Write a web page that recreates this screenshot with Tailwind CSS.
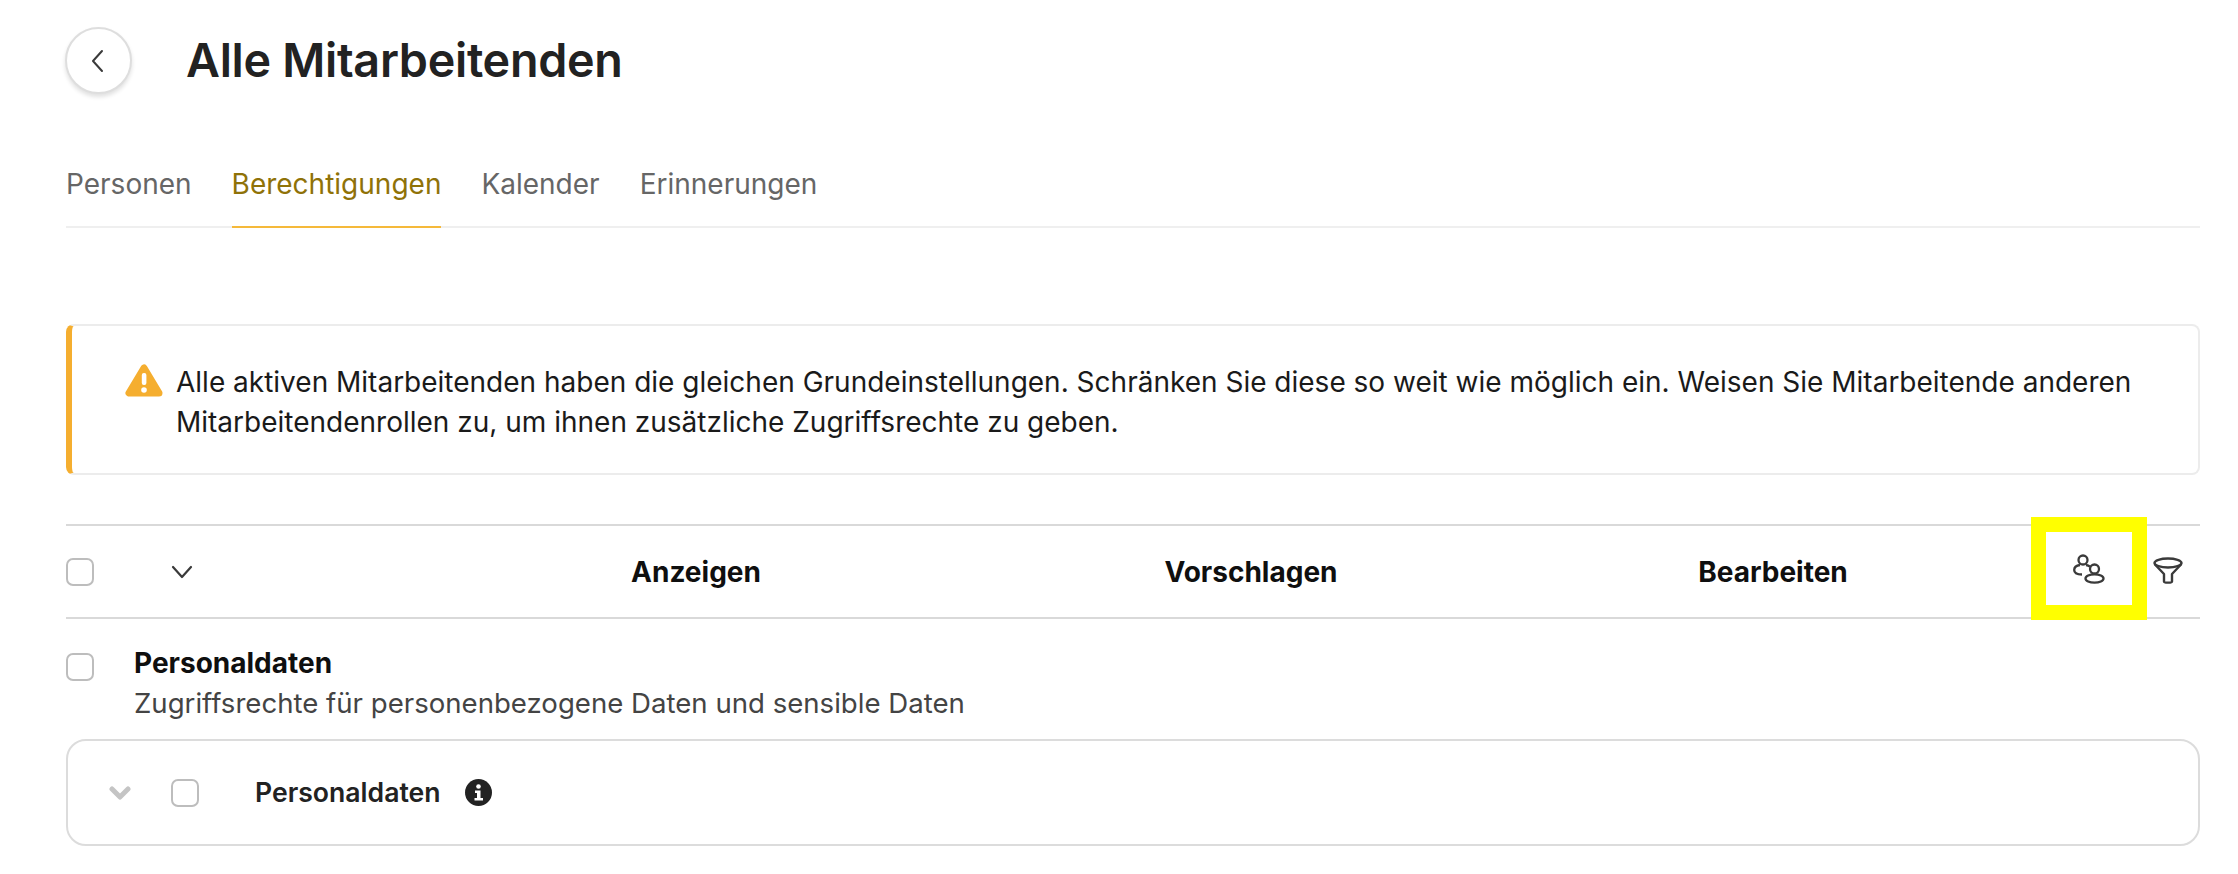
<!DOCTYPE html>
<html lang="de">
<head>
  <meta charset="UTF-8" />
  <title>Alle Mitarbeitenden</title>
  <script src="https://cdn.jsdelivr.net/npm/@tailwindcss/browser@4"></script>
</head>
<body class="bg-white font-['Inter',sans-serif] h-[874px] overflow-hidden">
  <main class="pl-[66px] pr-[38px]">

    <!-- Titel -->
    <div class="flex items-center gap-[54px] pt-[27px]">
      <button class="-ml-px w-[67px] h-[67px] rounded-full bg-white border-2 border-[#dedede] shadow-[0_3px_4px_rgba(0,0,0,0.12)] flex items-center justify-center">
        <svg class="-ml-[3px]" width="14" height="24" viewBox="0 0 14 24" fill="none" stroke="#3a3a3a" stroke-width="2" stroke-linecap="round" stroke-linejoin="round"><path d="M12 2 3 12l9 10"/></svg>
      </button>
      <h1 class="text-[46.7px] leading-[64px] -mt-[2px] font-semibold text-[#222222] tracking-[-0.3px]">Alle Mitarbeitenden</h1>
    </div>

    <!-- Tabs -->
    <nav class="flex gap-[40px] mt-[65px] h-[69px] border-b-2 border-[#efefef] text-[28px] leading-[50px] text-[#666666]">
      <a>Personen</a>
      <a class="h-[69px] text-[#8f7208] border-b-2 border-[#f5b93a]">Berechtigungen</a>
      <a>Kalender</a>
      <a>Erinnerungen</a>
    </nav>

    <!-- Hinweis -->
    <div class="mt-[96px] h-[151px] flex items-start gap-[13px] pl-[53px] pr-[50px] pt-[36px] rounded-[8px] border-2 border-[#ececec] border-l-[6px] border-l-[#f5ae2f] text-[28px] leading-[40px] text-[#1a1a1a]">
      <svg class="shrink-0 mt-[2px]" width="38" height="34" viewBox="0 0 38 34"><path d="M19 4 4 29h30z" fill="#f5ae2f" stroke="#f5ae2f" stroke-width="7" stroke-linejoin="round"/><rect x="16.8" y="9" width="4.6" height="12" rx="2" fill="#fff"/><circle cx="19" cy="26" r="2.8" fill="#fff"/></svg>
      <p>Alle aktiven Mitarbeitenden haben die gleichen Grundeinstellungen. Schränken Sie diese so weit wie möglich ein. Weisen Sie Mitarbeitende anderen Mitarbeitendenrollen zu, um ihnen zusätzliche Zugriffsrechte zu geben.</p>
    </div>

    <!-- Kopfzeile -->
    <div class="relative mt-[49px] h-[95px] flex items-center border-y-2 border-[#d9d9d9] text-[28px] font-bold text-[#0f0f0f]">
      <span class="w-[28px] h-[28px] rounded-[7px] border-2 border-[#bdbdbd]"></span>
      <svg class="ml-[77px]" width="22" height="14" viewBox="0 0 22 14" fill="none" stroke="#3a3a3a" stroke-width="2.2" stroke-linecap="round" stroke-linejoin="round"><path d="m2 2 9 10 9-10"/></svg>
      <span class="absolute left-[530px] w-[200px] text-center">Anzeigen</span>
      <span class="absolute left-[1085px] w-[200px] text-center">Vorschlagen</span>
      <span class="absolute left-[1607px] w-[200px] text-center">Bearbeiten</span>

      <!-- Markierung -->
      <div class="absolute left-[1965px] top-[-9px] w-[116px] h-[103px] border-[15px] border-[#ffff00] bg-white flex items-center justify-center">
        <svg width="32" height="30" viewBox="0 0 32 30" fill="none" stroke="#3a3a3a" stroke-width="2.3"><circle cx="10" cy="6" r="4.500"/><path d="M7 11C3.500 11.500 1.200 13.500 1.200 16c0 3 3 4.500 7.800 4.500"/><path d="M13 11c1.500.2 3 .8 4 1.700"/><circle cx="21.500" cy="15" r="4.500"/><ellipse cx="21.500" cy="24.500" rx="9" ry="4.200"/></svg>
      </div>
      <svg class="absolute left-[2087px] top-[31px]" width="30" height="27" viewBox="0 0 30 27" fill="none" stroke="#3a3a3a" stroke-width="2.4" stroke-linejoin="round"><ellipse cx="15" cy="6" rx="13.500" ry="4.500"/><path d="M2 7.500 11 17v7.500c0 1.500 8 1.500 8 0V17L28 7.500"/></svg>
    </div>

    <!-- Personaldaten -->
    <div class="flex mt-[32px]">
      <span class="mt-[2px] w-[28px] h-[28px] rounded-[7px] border-2 border-[#bdbdbd]"></span>
      <div class="ml-[40px]">
        <h2 class="text-[28px] leading-[40px] font-bold text-[#0f0f0f] -mt-[8px]">Personaldaten</h2>
        <p class="text-[27.6px] leading-[40px] text-[#444444]">Zugriffsrechte für personenbezogene Daten und sensible Daten</p>
      </div>
    </div>

    <div class="mt-[16px] h-[107px] flex items-center rounded-[20px] border-2 border-[#dcdcdc]">
      <svg class="ml-[41px]" width="22" height="14" viewBox="0 0 22 14" fill="none" stroke="#c4c4c4" stroke-width="5" stroke-linecap="round" stroke-linejoin="round"><path d="m3 3 8 8 8-8"/></svg>
      <span class="ml-[40px] w-[28px] h-[28px] rounded-[7px] border-2 border-[#bdbdbd]"></span>
      <span class="ml-[56px] text-[26.6px] font-semibold text-[#222222]">Personaldaten</span>
      <span class="ml-[24px] w-[27px] h-[27px] rounded-full bg-[#222222] flex items-center justify-center">
        <svg width="11" height="17" viewBox="0 0 11 17" fill="#fff"><circle cx="5.500" cy="2.500" r="2.300"/><path d="M2 6.500h5.500V14H10v2.500H1.500V14H4V9H2z"/></svg>
      </span>
    </div>
  </main>
</body>
</html>
